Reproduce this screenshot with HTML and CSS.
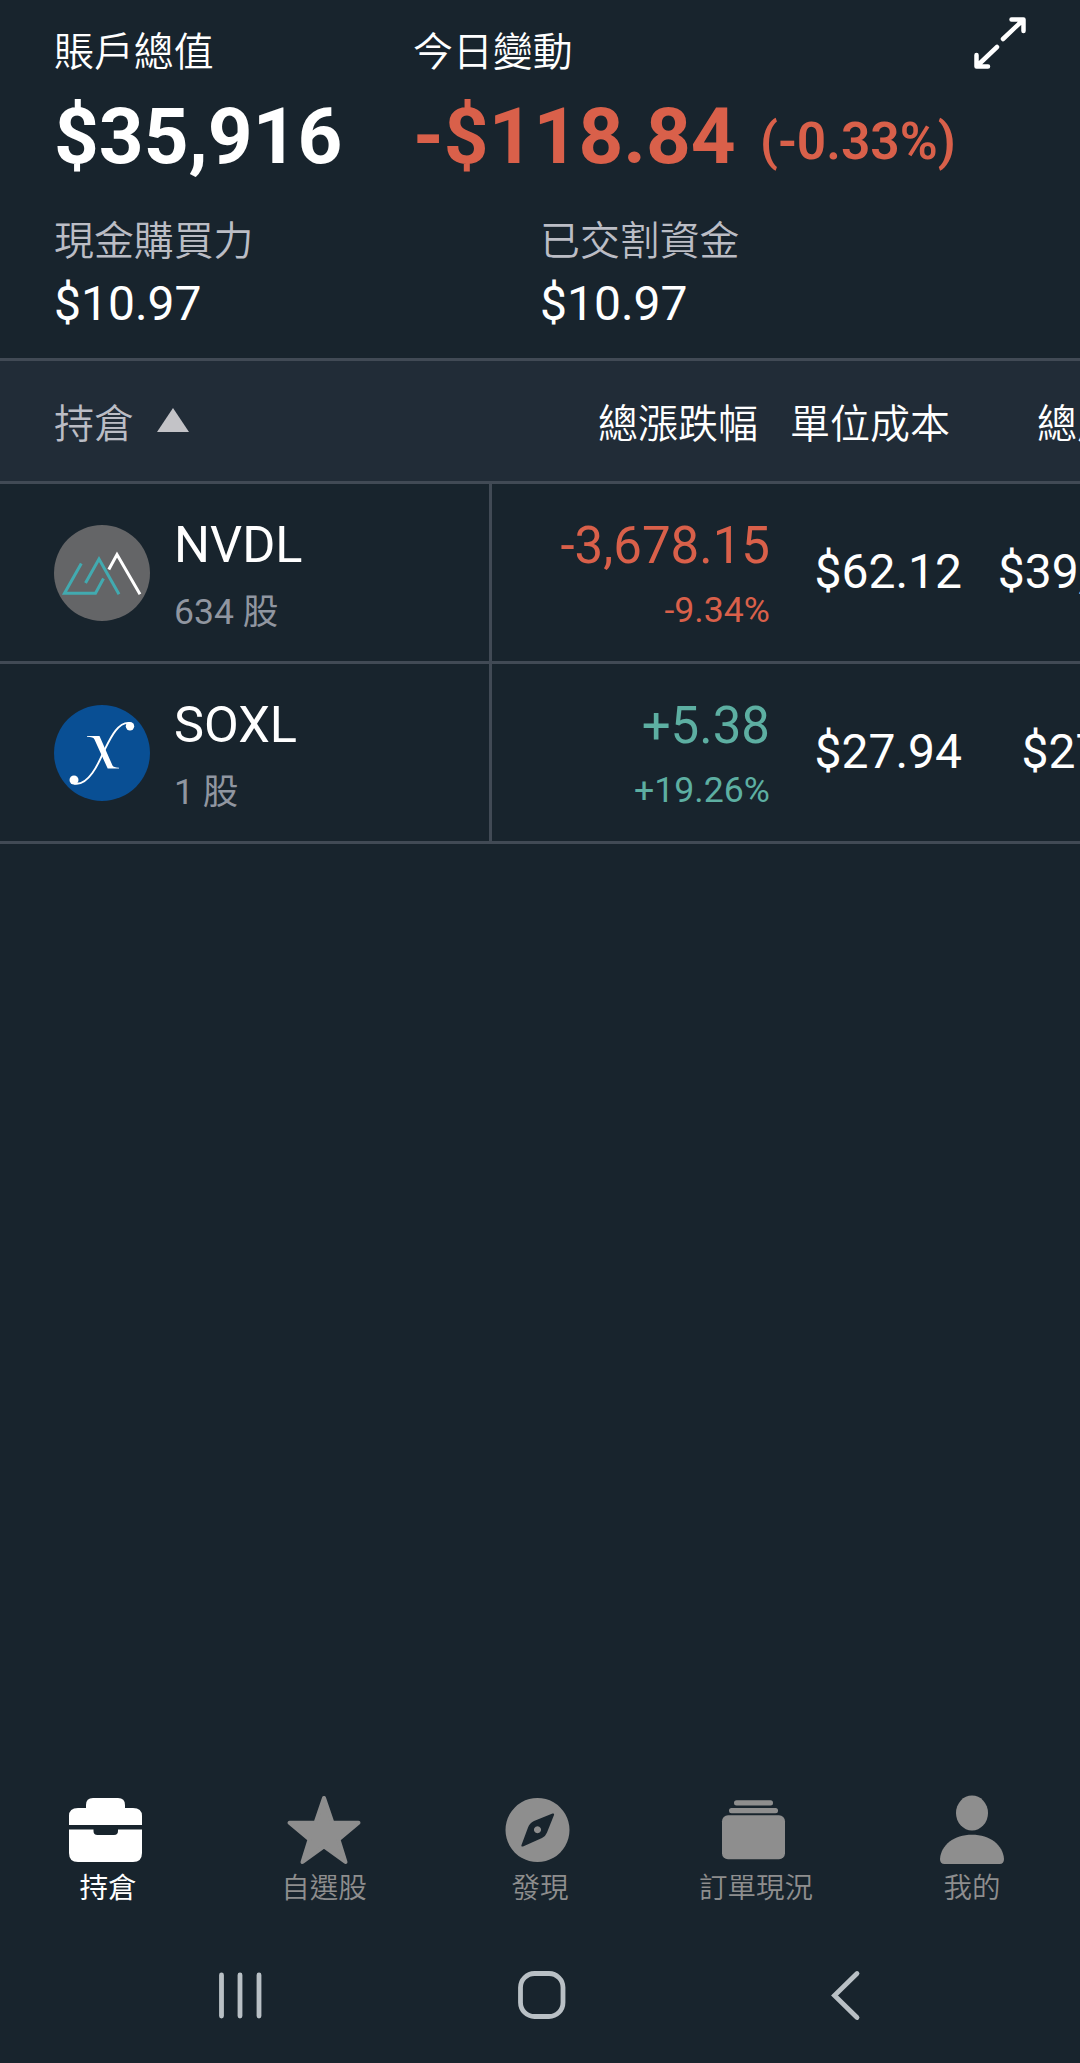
FILE: index.html
```
<!DOCTYPE html>
<html lang="zh-Hant">
<head>
    <meta charset="UTF-8">
    <title>持倉</title>
    <link rel="stylesheet" href="styles.css">
</head>
<body>
<div class="app">
    <header class="summary">
        <div class="summary-row">
            <div class="total">
                <div class="label">賬戶總值</div>
                <div class="big">$35,916</div>
            </div>
            <div class="change">
                <div class="label">今日變動</div>
                <div class="big red">-$118.84 <span class="pct">(-0.33%)</span></div>
            </div>
            <svg class="expand" viewBox="0 0 52 52">
                <path d="M29 22 49 3M37.500 2.500H49.500V14M23 30 3 49M2.500 38V49.500H14"/>
            </svg>
        </div>
        <div class="funds">
            <div>
                <div class="label muted">現金購買力</div>
                <div class="cash">$10.97</div>
            </div>
            <div>
                <div class="label muted">已交割資金</div>
                <div class="cash">$10.97</div>
            </div>
        </div>
    </header>

    <main class="table">
        <div class="row head">
            <div class="name muted">持倉 <span class="sort"></span></div>
            <div class="cell">總漲跌幅</div>
            <div class="cell">單位成本</div>
            <div class="cell">總成本</div>
        </div>
        <div class="row">
            <div class="name">
                <svg class="logo" viewBox="0 0 96 96">
                    <circle cx="48" cy="48" r="48" fill="#646567"/>
                    <g fill="none" stroke-width="3">
                        <path d="M27.300 38.500 10.500 68.200H41.500L49.500 53.500M31.500 58 45 34 65 69.300" stroke="#42aab0"/>
                        <path d="M54.800 44.500 63 29.500 86 69.300" stroke="#fff"/>
                    </g>
                </svg>
                <div>
                    <div class="ticker">NVDL</div>
                    <div class="shares">634 股</div>
                </div>
            </div>
            <div class="cell red">
                <div class="gain">-3,678.15</div>
                <div class="rate">-9.34%</div>
            </div>
            <div class="cell">$62.12</div>
            <div class="cell">$39,384</div>
        </div>
        <div class="row">
            <div class="name">
                <svg class="logo" viewBox="0 0 96 96">
                    <circle cx="48" cy="48" r="48" fill="#094f94"/>
                    <path d="M20 78.500C35 82 46 55 50 46 56 34 64 16 76 18" fill="none" stroke="#fff" stroke-width="1.900"/>
                    <path d="M33 31H45.500L58.500 60.500Q59.500 62.500 65 62.700V63.600H53.700L40.500 34.500Q39.500 32 33 31.800Z" fill="#fff"/>
                    <circle cx="20" cy="75" r="4.500" fill="#fff"/>
                    <circle cx="76" cy="21.200" r="4.200" fill="#fff"/>
                </svg>
                <div>
                    <div class="ticker">SOXL</div>
                    <div class="shares">1 股</div>
                </div>
            </div>
            <div class="cell green">
                <div class="gain">+5.38</div>
                <div class="rate">+19.26%</div>
            </div>
            <div class="cell">$27.94</div>
            <div class="cell">$27.94</div>
        </div>
    </main>

    <nav class="tabs">
        <a class="tab active">
            <svg viewBox="0 0 80 72">
                <path d="M3 31V22Q3 14 12 14H20V11Q20 4 27 4H52Q59 4 59 11V14H67Q76 14 76 22V31Z"/>
                <path d="M3 35.500H27.500V37Q27.500 41 31.500 41H48Q52 41 52 37V35.500H76V59Q76 68 67 68H12Q3 68 3 59Z"/>
            </svg>
            <span>持倉</span>
        </a>
        <a class="tab">
            <svg viewBox="0 0 80 72">
                <path d="M40 4 48.500 28.800H74.500L54.500 45.500 61.500 68 40 52.500 18.500 68 25.500 45.500 5.500 28.800H31.500Z" stroke="#8e8e8e" stroke-width="4" stroke-linejoin="round"/>
            </svg>
            <span>自選股</span>
        </a>
        <a class="tab">
            <svg viewBox="0 0 80 72">
                <path fill-rule="evenodd" d="M37.500 4a32 32 0 1 0 .01 0ZM52.500 19.500Q54.500 19 54 21L47 38.500Q45.500 42.500 42 44L23 52.500Q21 53 21.500 51L28 33.500Q29.500 29 34 27ZM37.500 32.300a3.500 3.500 0 1 1-.01 0Z"/>
            </svg>
            <span>發現</span>
        </a>
        <a class="tab">
            <svg viewBox="0 0 80 72">
                <rect x="18" y="6.300" width="39" height="5.200" rx="2.500"/>
                <rect x="13" y="14" width="49" height="5.200" rx="2.500"/>
                <rect x="6" y="21.200" width="63" height="44" rx="6"/>
            </svg>
            <span>訂單現況</span>
        </a>
        <a class="tab">
            <svg viewBox="0 0 80 72">
                <ellipse cx="40" cy="19" rx="16" ry="17.500"/>
                <path d="M8 65C9 51 22 40.800 40 40.800S71 51 72 65Q72 70 67.500 70H12.500Q8 70 8 65Z"/>
            </svg>
            <span>我的</span>
        </a>
    </nav>

    <div class="sysbar">
        <svg viewBox="0 0 48 54"><path d="M5.500 7V48M24 7V48M43 7V48"/></svg>
        <svg viewBox="3 0 54 54"><rect x="5.500" y="5.500" width="42.500" height="43" rx="14"/></svg>
        <svg viewBox="1.500 0 40 54"><path d="M33.500 5.500 11 27.500 33.500 49.500"/></svg>
    </div>
</div>
</body>
</html>
```

FILE: styles.css
```
* {
    box-sizing: border-box;
}
body {
    margin: 0;
    background: #18242d;
    color: #fff;
    font-family: Roboto, "Noto Sans CJK TC", sans-serif;
    font-size: 40px;
}
.app {
    height: 2063px;
    display: flex;
    flex-direction: column;
    overflow: hidden;
}
.label {
    font-size: 39.9px;
    line-height: 60px;
    font-weight: 350;
}
.muted {
    color: #bbbdc5;
}
.red {
    color: #d9604a;
}
.green {
    color: #5dafa2;
}

/* account summary */
.summary {
    height: 358px;
    padding: 23px 54px 0;
}
.summary-row {
    display: flex;
    height: 189px;
}
.total {
    width: 359px;
}
.change {
    flex: 1;
    white-space: nowrap;
}
.big {
    font-size: 78.2px;
    line-height: 92px;
    margin-top: 7px;
    font-weight: 700;
}
.pct {
    margin-left: 5px;
    font-size: 51.5px;
    font-weight: 600;
    vertical-align: 4px;
}
.expand {
    width: 52px;
    height: 52px;
    margin-top: -6px;
    fill: none;
    stroke: #fff;
    stroke-width: 4.5;
    stroke-linecap: round;
    stroke-linejoin: round;
}
.funds {
    display: grid;
    grid-template-columns: 486px 1fr;
}
.cash {
    font-size: 48px;
    line-height: 56px;
    margin-top: 4px;
}

/* holdings */
.row {
    display: grid;
    grid-template-columns: 492px 296px 192px 207px;
    height: 180px;
    border-bottom: 3px solid #414a55;
}
.name {
    display: flex;
    align-items: center;
    padding-left: 54px;
    border-right: 3px solid #414a55;
}
.cell {
    display: flex;
    flex-direction: column;
    justify-content: center;
    align-items: flex-end;
    padding-right: 18px;
    padding-bottom: 2px;
    font-size: 48px;
}
.head {
    height: 126px;
    background: #212c37;
    border-top: 3px solid #414a55;
    font-weight: 350;
}
.head .name {
    border-right: 0;
}
.head .cell {
    font-size: 40px;
    padding-right: 30px;
    padding-bottom: 0;
}
.sort {
    margin-left: 23px;
    margin-bottom: 2px;
    border: 16px solid transparent;
    border-top: 0;
    border-bottom: 24px solid #c3c3c7;
}
.logo {
    width: 96px;
    height: 96px;
    margin-right: 24px;
}
.ticker,
.gain {
    font-size: 51px;
    line-height: 60px;
}
.shares,
.rate {
    font-size: 35.7px;
    line-height: 54px;
    margin-top: 7px;
}
.gain {
    margin-top: 9px;
}
.ticker {
    margin-top: 9px;
    font-size: 50.5px;
}
.shares {
    margin-top: 10px;
    color: #9096a0;
    font-size: 35.5px;
    font-weight: 370;
}

/* bottom tabs */
.tabs {
    display: grid;
    grid-template-columns: repeat(5, 1fr);
    margin-top: auto;
}
.tab {
    display: flex;
    flex-direction: column;
    align-items: center;
    color: #8e8e8e;
    font-size: 28.5px;
    font-weight: 350;
    line-height: 42px;
}
.tab svg {
    width: 80px;
    height: 72px;
    margin-bottom: 2px;
    fill: currentColor;
}
.tab.active {
    color: #fff;
    font-weight: 400;
}
.tab.active svg {
    margin-right: 4px;
}
.sysbar {
    display: flex;
    height: 153px;
    padding: 58px 215px 0 216px;
    justify-content: space-between;
}
.sysbar svg {
    height: 54px;
    fill: none;
    stroke: #b9c0c5;
    stroke-width: 4.8;
    stroke-linecap: round;
}
```
